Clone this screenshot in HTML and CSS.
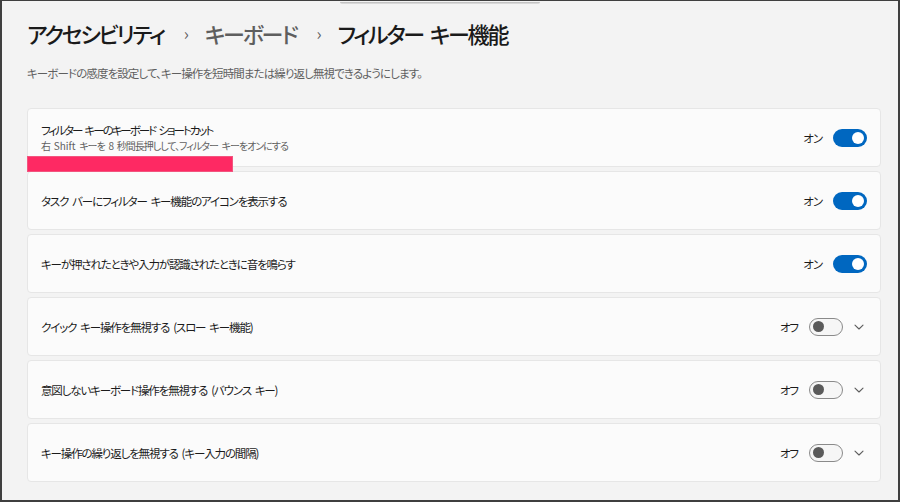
FILE: index.html
```html
<!DOCTYPE html>
<html lang="ja">
<head>
<meta charset="utf-8">
<link rel="stylesheet" href="styles.css">
</head>
<body>
<div class="frame">
  <div class="topline"></div>
  <h1 class="crumbs">
    <span class="crumb strong">アクセシビリティ</span>
    <span class="sep">›</span>
    <span class="crumb muted">キーボード</span>
    <span class="sep">›</span>
    <span class="crumb strong">フィルター キー機能</span>
  </h1>
  <p class="desc">キーボードの感度を設定して、キー操作を短時間または繰り返し無視できるようにします。</p>
  <div class="list">
    <div class="card">
      <div class="texts">
        <div class="title kana">フィルター キーのキーボード ショートカット</div>
        <div class="sub">右 <span class="lat">Shift</span> キーを 8 秒間長押しして、フィルター キーをオンにする</div>
      </div>
      <div class="ctrl"><span class="state">オン</span><span class="toggle on"><span class="knob"></span></span></div>
    </div>
    <div class="card">
      <div class="texts"><div class="title">タスク バーにフィルター キー機能のアイコンを表示する</div></div>
      <div class="ctrl"><span class="state">オン</span><span class="toggle on"><span class="knob"></span></span></div>
    </div>
    <div class="card">
      <div class="texts"><div class="title">キーが押されたときや入力が認識されたときに音を鳴らす</div></div>
      <div class="ctrl"><span class="state">オン</span><span class="toggle on"><span class="knob"></span></span></div>
    </div>
    <div class="card">
      <div class="texts"><div class="title">クイック キー操作を無視する (スロー キー機能)</div></div>
      <div class="ctrl"><span class="state">オフ</span><span class="toggle off"><span class="knob"></span></span>
        <svg class="chev" width="12" height="12" viewBox="0 0 12 12"><path d="M2 4.2 L6 8 L10 4.2" fill="none" stroke="#5c5c5c" stroke-width="1.1" stroke-linecap="round" stroke-linejoin="round"/></svg></div>
    </div>
    <div class="card">
      <div class="texts"><div class="title">意図しないキーボード操作を無視する (バウンス キー)</div></div>
      <div class="ctrl"><span class="state">オフ</span><span class="toggle off"><span class="knob"></span></span>
        <svg class="chev" width="12" height="12" viewBox="0 0 12 12"><path d="M2 4.2 L6 8 L10 4.2" fill="none" stroke="#5c5c5c" stroke-width="1.1" stroke-linecap="round" stroke-linejoin="round"/></svg></div>
    </div>
    <div class="card">
      <div class="texts"><div class="title">キー操作の繰り返しを無視する (キー入力の間隔)</div></div>
      <div class="ctrl"><span class="state">オフ</span><span class="toggle off"><span class="knob"></span></span>
        <svg class="chev" width="12" height="12" viewBox="0 0 12 12"><path d="M2 4.2 L6 8 L10 4.2" fill="none" stroke="#5c5c5c" stroke-width="1.1" stroke-linecap="round" stroke-linejoin="round"/></svg></div>
    </div>
  </div>
  <div class="highlight"></div>
</div>
</body>
</html>
```

FILE: styles.css
```css
* { box-sizing: border-box; }
html, body { margin: 0; padding: 0; }
body {
  width: 900px;
  height: 502px;
  overflow: hidden;
  font-family: "Noto Sans CJK JP", "Noto Sans", sans-serif;
  font-feature-settings: "palt" 1;
  color: #1b1b1b;
}
.frame {
  position: relative;
  width: 900px;
  height: 502px;
  background: #f3f3f3;
  border-style: solid;
  border-color: #3f3f3f;
  border-width: 1px 2px 2px 2px;
  padding: 0 17px 0 25px;
  display: flex;
  flex-direction: column;
}
.topline {
  position: absolute;
  top: 1px;
  left: 338px;
  width: 200px;
  height: 2px;
  background: linear-gradient(to bottom, #b9b9b9, #e2e2e2);
  border-radius: 0 0 2px 2px;
}
.crumbs {
  margin: 14px 0 0 0;
  font-size: 22px;
  font-weight: 500;
  line-height: 36px;
  letter-spacing: -2.2px;
  word-spacing: 4px;
  display: flex;
  align-items: center;
  white-space: nowrap;
}
.crumb.strong { color: #1a1a1a; }
.crumb.muted { color: #5e5e5e; }
.sep {
  font-size: 17px;
  color: #5e5e5e;
  margin: 0 16px 0 20px;
  font-weight: 400;
  letter-spacing: 0;
}
.desc {
  margin: 13px 0 0 0;
  font-size: 11.5px;
  line-height: 18px;
  letter-spacing: -0.9px;
  color: #5f5f5f;
}
.list {
  margin-top: 26px;
  display: flex;
  flex-direction: column;
  gap: 4px;
}
.card {
  height: 59px;
  background: #fbfbfb;
  border: 1px solid #e6e6e6;
  border-radius: 4px;
  padding: 0 13px 0 13px;
  display: flex;
  align-items: center;
  justify-content: space-between;
}
.texts { display: flex; flex-direction: column; }
.title {
  font-size: 11.5px;
  line-height: 16px;
  letter-spacing: -1.15px;
  word-spacing: 2.5px;
  color: #1b1b1b;
}
.title.kana { letter-spacing: -2px; }
.sub {
  font-size: 10px;
  line-height: 14px;
  letter-spacing: -1px;
  word-spacing: 2.5px;
  color: #616161;
  margin-top: 1px;
}
.lat { letter-spacing: 0; }
.ctrl {
  display: flex;
  align-items: center;
}
.state {
  font-size: 11.5px;
  letter-spacing: -1px;
  color: #1b1b1b;
  margin-right: 11px;
}
.toggle {
  position: relative;
  width: 34px;
  height: 18px;
  border-radius: 9px;
  display: flex;
  align-items: center;
}
.toggle.on {
  background: #0067c0;
  justify-content: flex-end;
  padding-right: 3px;
}
.toggle.on .knob {
  width: 12px;
  height: 12px;
  border-radius: 50%;
  background: #ffffff;
}
.toggle.off {
  background: #f6f6f6;
  border: 1px solid #8a8a8a;
  padding-left: 3px;
}
.toggle.off .knob {
  width: 11px;
  height: 11px;
  border-radius: 50%;
  background: #5a5a5a;
}
.chev { margin-left: 10px; margin-right: 2px; }
.highlight {
  position: absolute;
  left: 25px;
  top: 155px;
  width: 206px;
  height: 16px;
  background: #fe2963;
  border: 1px solid #f2557f;
}
```
